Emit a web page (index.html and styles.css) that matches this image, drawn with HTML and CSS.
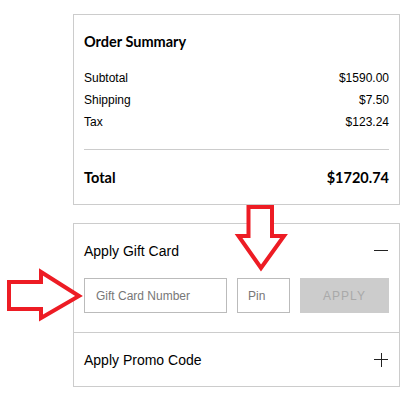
FILE: index.html
```html
<!DOCTYPE html>
<html>
<head>
<meta charset="utf-8">
<link rel="stylesheet" href="styles.css">
</head>
<body>
<div class="page">
  <section class="card summary">
    <h2 class="title">Order Summary</h2>
    <div class="row"><span>Subtotal</span><span>$1590.00</span></div>
    <div class="row"><span>Shipping</span><span>$7.50</span></div>
    <div class="row"><span>Tax</span><span>$123.24</span></div>
    <hr class="divider">
    <div class="row total"><span>Total</span><span>$1720.74</span></div>
  </section>

  <section class="card codes">
    <div class="gift">
      <div class="acc-head">
        <span>Apply Gift Card</span>
        <span class="icon minus"></span>
      </div>
      <div class="gift-form">
        <input class="field number" type="text" placeholder="Gift Card Number">
        <input class="field pin" type="text" placeholder="Pin">
        <button class="apply" disabled>APPLY</button>
      </div>
    </div>
    <div class="promo">
      <div class="acc-head">
        <span>Apply Promo Code</span>
        <span class="icon plus"></span>
      </div>
    </div>
  </section>

  <svg class="arrow arrow-down" width="52" height="70" viewBox="0 0 52 70">
    <polygon points="11.5,2 35,2 35,31 47,31 24,63 1.5,31 11.5,31" />
  </svg>
  <svg class="arrow arrow-right" width="78" height="52" viewBox="0 0 78 52">
    <polygon points="2,12 34,12 34,2 72,26 34,48 34,39 2,39" />
  </svg>
</div>
</body>
</html>
```

FILE: styles.css
```css
* { box-sizing: border-box; }

html, body {
  margin: 0;
  padding: 0;
  background: #fff;
}

.page {
  position: relative;
  padding: 14px 0 0 73px;
  width: 418px;
  height: 403px;
  font-family: "Liberation Sans", Arial, sans-serif;
  color: #000;
}

.card {
  width: 327px;
  border: 1px solid #cccccc;
  background: #fff;
}

.summary {
  padding: 17px 10px 16px;
  margin-bottom: 18px;
}

.title {
  margin: 0 0 15px;
  font-family: "Lato", "Liberation Sans", sans-serif;
  font-weight: 700;
  font-size: 14.5px;
  line-height: 20px;
  color: #000;
}

.row {
  display: flex;
  justify-content: space-between;
  align-items: center;
  height: 22px;
  font-size: 12px;
}

.divider {
  border: 0;
  border-top: 1px solid #cccccc;
  margin: 16px 0 16px;
  height: 0;
}

.row.total {
  font-family: "Lato", "Liberation Sans", sans-serif;
  font-weight: 700;
  font-size: 14.5px;
  color: #000;
}

.gift {
  padding: 17px 10px 19px;
  border-bottom: 1px solid #cccccc;
}

.promo {
  padding: 17px 10px 16px;
}

.acc-head {
  display: flex;
  justify-content: space-between;
  align-items: center;
  height: 20px;
  font-size: 14px;
  color: #000;
}

.icon {
  position: relative;
  width: 14px;
  height: 14px;
  margin-right: 1px;
}

.icon::before,
.icon::after {
  content: "";
  position: absolute;
  background: #222;
}

.icon::before {
  left: 0;
  right: 0;
  top: 6px;
  height: 1px;
}

.plus::after {
  top: 0;
  bottom: 0;
  left: 7px;
  width: 1px;
}

.minus::after { display: none; }

.gift-form {
  display: flex;
  gap: 10px;
  margin-top: 17px;
  height: 35px;
}

.field {
  height: 35px;
  border: 1px solid #bbbbbb;
  padding: 0 11px;
  font-family: "Liberation Sans", Arial, sans-serif;
  font-size: 12px;
  color: #333;
  outline: none;
  margin: 0;
}

.field::placeholder {
  color: #777777;
}

.number { width: 143px; }
.pin { width: 53px; padding: 0 10px; }

.apply {
  flex: 1;
  height: 35px;
  border: 0;
  margin: 0;
  background: #cccccc;
  color: #a9a9a9;
  font-family: "Liberation Sans", Arial, sans-serif;
  font-size: 12px;
  letter-spacing: 1px;
}

.arrow {
  position: absolute;
  overflow: visible;
}

.arrow polygon {
  fill: #fff;
  stroke: #ed1c24;
  stroke-width: 4;
  stroke-linejoin: miter;
}

.arrow-down {
  left: 237px;
  top: 205px;
}

.arrow-right {
  left: 7px;
  top: 270px;
}
```
